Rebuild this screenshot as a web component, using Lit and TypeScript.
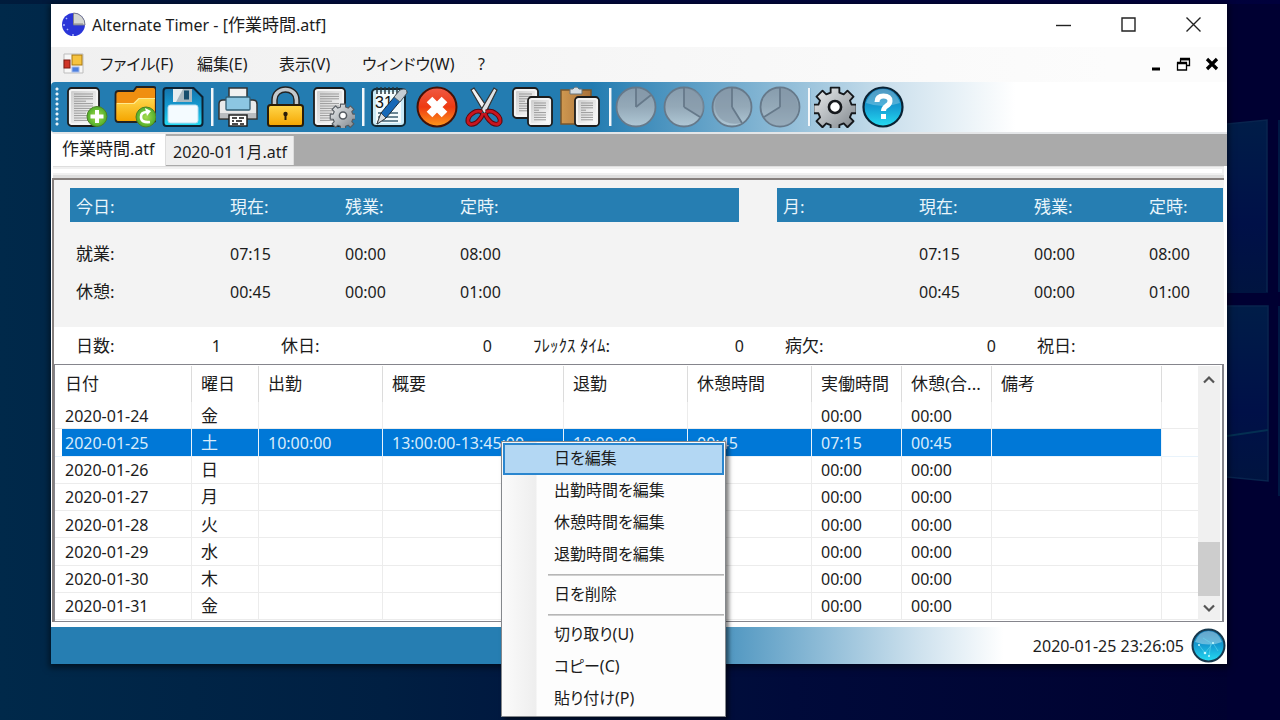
import { LitElement, html, css, svg } from "lit";
import { customElement, state } from "lit/decorators.js";
import { classMap } from "lit/directives/class-map.js";

const page = (x: number, y: number, w: number, h: number) => svg`
  <rect x=${x} y=${y} width=${w} height=${h} rx="3.5" fill="#f4f4f4" stroke="#1c1c1c" stroke-width="1.8"/>
  <rect x=${x + 3} y=${y + 3} width=${w - 6} height=${h - 6} rx="1" fill="url(#paper)"/>
  ${[0, 1, 2, 3, 4, 5, 6, 7, 8, 9, 10, 11].filter((i) => 6 + i * 2.4 < h - 5).map(
    (i) => svg`<path d="M${x + 6} ${y + 6 + i * 2.4}h${i % 5 === 3 ? w - 19 : w - 12}" stroke="#9a9a9a" stroke-width="1"/>`
  )}`;

const cog = (cx: number, cy: number, r: number, fill: string, line: string) => svg`
  <g transform="translate(${cx} ${cy}) scale(${r / 20})" stroke=${line} stroke-width=${r > 15 ? 1.9 : 2} stroke-linejoin="round" fill=${fill}>
    <path d="M-4.5-20h9v5.200l4.500 1.800 3.900-3.900 6.200 6.200-3.700 4 1.700 4.200h5.200v9h-5.200l-1.700 4.200 3.700 4-6.200 6.200-3.900-3.900-4.500 1.800v5.200h-9v-5.200l-4.500-1.800-3.900 3.900-6.200-6.200 3.700-4-1.700-4.200h-5.200v-9h5.200l1.700-4.200-3.700-4 6.200-6.200 3.900 3.900 4.500-1.800z" transform="scale(.88)"/>
    <circle r="5.500" fill="#fff" stroke-width="2.400"/>
  </g>`;

const pie = (d: string, shade: string) => svg`
  <circle cx="21" cy="21" r="19.500" fill="url(#disc)" stroke="#66798a" stroke-width="1.800"/>
  <path d=${shade} fill="#8496a5" opacity=".55"/>
  <path d=${d} fill="none" stroke="#66798a" stroke-width="1.800"/>`;

const icons: Record<string, unknown> = {
  add: svg`${page(2, 2, 31, 38)}
    <circle cx="31" cy="30.500" r="10" fill="url(#green)" stroke="#4d7f27" stroke-width="1"/>
    <path d="M31 24v13M24.500 30.500h13" stroke="#fff" stroke-width="4"/>`,
  open: svg`<path d="M1.500 8q0-3 3-3h15l3-4h17q2.500 0 2.500 3v30q0 2-3 2h-34.500q-3 0-3-3z" fill="#f08f10" stroke="#222" stroke-width="1.800"/>
    <path d="M2.500 17h17l5-5h16v21q0 2-3 2H5q-2.500 0-2.500-2z" fill="url(#gold)"/><path d="M3 17.500h17l5-5h16" fill="none" stroke="#ffe98c" stroke-width="1.200"/>
    <circle cx="32" cy="31" r="10" fill="url(#green)" stroke="#4d7f27"/>
    <path d="M36 36q-9 1-9-5 0-5 6-5" fill="none" stroke="#fff" stroke-width="2.600"/><path d="M31 22l6 3-4 5z" fill="#fff"/>`,
  save: svg`<path d="M1.500 5q0-3 3-3h27l9 9v26q0 3-3 3h-33q-3 0-3-3z" fill="url(#azure)" stroke="#0d2232" stroke-width="2"/>
    <rect x="11" y="3" width="19" height="13" fill="#a9b9c1"/><path d="M11 3h10l-7 13h-3z" fill="#e6edf0"/><rect x="22" y="4.500" width="5" height="9" fill="#174e6d"/>
    <rect x="6" y="19" width="30" height="18" rx="2.500" fill="#f4fbff" stroke="#b7dcef"/>`,
  print: svg`<path d="M12 2h18v12H12z" fill="#f1f1f1" stroke="#333" stroke-width="1.500"/>
    <path d="M2 18q0-4 4-4h30q4 0 4 4v15H2z" fill="#e9eaeb" stroke="#333" stroke-width="1.500"/><path d="M3 27h36v5H3z" fill="#b9bdc1"/>
    <rect x="9" y="11" width="24" height="13" rx="1" fill="#8cc6e2" stroke="#315d73" stroke-width="1.300"/>
    <path d="M12 29h18v11H12z" fill="#fff" stroke="#222" stroke-width="1.500"/><path d="M15 32h5m2 0h5M15 35h2m2 0h6M15 38h6m2 0h4" stroke="#111" stroke-width="1.600"/>`,
  lock: svg`<path d="M9.500 20V14C9.500 0 31.500 0 31.500 14v6" fill="none" stroke="#222" stroke-width="6.500"/><path d="M9.500 20V14C9.500 0 31.500 0 31.500 14v6" fill="none" stroke="#c3c8cc" stroke-width="3.600"/>
    <rect x="3" y="19" width="35" height="21" rx="2.500" fill="url(#gold)" stroke="#2b1d08" stroke-width="2"/><circle cx="20.500" cy="28" r="2.200" fill="#2b1d08"/><path d="M19.500 28h2v6h-2z" fill="#2b1d08"/>`,
  config: svg`${page(1, 2, 31, 38)}${cog(30, 29.5, 13, "url(#steel)", "#555b61")}`,
  note: svg`<rect x="4" y="3" width="33" height="37" rx="4" fill="#c9eaf7" stroke="#122833" stroke-width="2"/><rect x="8" y="6" width="25" height="31" fill="#f4fbfd"/>
    <path d="M9 1v7m4-7v7m4-7v7m4-7v7m4-7v7m4-7v7" stroke="#26343b" stroke-width="1.500"/>
    <text x="7" y="22" font-family="Liberation Sans" font-size="16" fill="#111">31</text>
    <path d="M10 27h20M10 31h20M14 35h16" stroke="#3e6173" stroke-width="1.500"/>
    <path d="M9 38l4-11L32 4q7-3 7 3L18 32z" fill="#1769b8" stroke="#1b2c3c" stroke-width="1"/><path d="M26 11L32 4q7-3 7 3l-7 9z" fill="#c4cdd3" stroke="#4e5a62"/><path d="M9 38l4-11 5 5z" fill="#d9dde0" stroke="#333" stroke-width=".800"/>`,
  cancel: svg`<circle cx="21" cy="21" r="19.500" fill="url(#red)" stroke="#431207" stroke-width="2"/>
    <path d="M13.500 13.500l15 15m0-15l-15 15" stroke="#fff" stroke-width="8"/>`,
  cut: svg`<path d="M7 4l3-2 15 22-4 4z" fill="#f2f2f2" stroke="#333" stroke-width="1.200"/><path d="M33 4l-3-2-13 22 4 4z" fill="#dfe2e4" stroke="#333" stroke-width="1.200"/>
    <path d="M18 26q-5-2-9 1-6 4-5 9 2 4 8 1 6-5 7-10M22 26q5-2 9 1 6 4 5 9-2 4-8 1-6-5-7-10" fill="none" stroke="#5a080d" stroke-width="4.800"/>
    <path d="M18 26q-5-2-9 1-6 4-5 9 2 4 8 1 6-5 7-10M22 26q5-2 9 1 6 4 5 9-2 4-8 1-6-5-7-10" fill="none" stroke="#c9151f" stroke-width="2.800"/>`,
  copy: svg`${page(1, 2, 25, 30)}${page(16, 11, 24, 29)}`,
  paste: svg`<path d="M1 4h30v34H1z" fill="url(#wood)" stroke="#7b552a" stroke-width="1.500"/><path d="M10 3h3q3-4 6 0h3v5H10z" fill="#d5dde2" stroke="#69747b"/>${page(15, 11, 24, 29)}`,
  pie1: pie("M21 21V2M21 21L36 9", "M21 21V2q9 1 15 7z"),
  pie2: pie("M21 21V2M21 21L37 31", "M21 21V2c18 0 25 18 16 29z"),
  pie3: pie("M21 21V2M21 21L31 37", "M21 21V2C-3 2-3 44 31 37z"),
  pie4: pie("M21 21V2M21 21L5 31", "M21 21V2c22 0 26 38 0 38q-11 0-16-9z"),
  gear: cog(21, 21, 22, "url(#steel)", "#15181c"),
  help: svg`<circle cx="21" cy="21" r="19.500" fill="url(#azure)" stroke="#0a2233" stroke-width="2.200"/><path d="M4 17Q9 3 21 3t17 14q-17 6-34 0z" fill="#fff" opacity=".250"/>
    <path d="M15 16q0-6 6.500-6t6.500 5q0 3-3.500 5-3 2-3 5" fill="none" stroke="#fff" stroke-width="5"/><path d="M19 28h5v5h-5z" fill="#fff"/>`,
};

const defs = svg`<defs>
  <linearGradient id="paper" x2="1" y2="1"><stop stop-color="#cfcfcf"/><stop offset="1" stop-color="#fbfbfb"/></linearGradient>
  <radialGradient id="green"><stop stop-color="#a7dc4f"/><stop offset="1" stop-color="#4fae2a"/></radialGradient>
  <linearGradient id="gold" x2="0" y2="1"><stop stop-color="#ffd84d"/><stop offset="1" stop-color="#f5a500"/></linearGradient>
  <linearGradient id="azure" x2="0" y2="1"><stop stop-color="#1473ab"/><stop offset=".5" stop-color="#159cd2"/><stop offset="1" stop-color="#25dcf2"/></linearGradient>
  <linearGradient id="red" x2="0" y2="1"><stop stop-color="#ef5a45"/><stop offset=".5" stop-color="#ee3a12"/><stop offset="1" stop-color="#ff9a1c"/></linearGradient>
  <linearGradient id="steel" x2="1" y2="1"><stop stop-color="#eceeef"/><stop offset=".5" stop-color="#b4b9bd"/><stop offset="1" stop-color="#7c8288"/></linearGradient>
  <linearGradient id="wood" x2="1" y2="0"><stop stop-color="#cf9850"/><stop offset="1" stop-color="#a8713a"/></linearGradient>
  <linearGradient id="disc" x2="0" y2="1"><stop stop-color="#879cad"/><stop offset=".5" stop-color="#94a9b8"/><stop offset="1" stop-color="#b0c8d6"/></linearGradient>
</defs>`;

const tools: [string, string][] = [
  ["add", "新規"], ["open", "開く"], ["save", "保存"], ["|", ""],
  ["print", "印刷"], ["lock", "ロック"], ["config", "設定"], ["|", ""],
  ["note", "日を編集"], ["cancel", "削除"], ["cut", "切り取り"], ["copy", "コピー"], ["paste", "貼り付け"], ["|", ""],
  ["pie1", "出勤"], ["pie2", "休憩開始"], ["pie3", "休憩終了"], ["pie4", "退勤"], ["|", ""],
  ["gear", "オプション"], ["help", "ヘルプ"],
];

const rows = [
  ["2020-01-24", "金", "", "", "", "", "00:00", "00:00", ""],
  ["2020-01-25", "土", "10:00:00", "13:00:00-13:45:00", "18:00:00", "00:45", "07:15", "00:45", ""],
  ["2020-01-26", "日", "", "", "", "", "00:00", "00:00", ""],
  ["2020-01-27", "月", "", "", "", "", "00:00", "00:00", ""],
  ["2020-01-28", "火", "", "", "", "", "00:00", "00:00", ""],
  ["2020-01-29", "水", "", "", "", "", "00:00", "00:00", ""],
  ["2020-01-30", "木", "", "", "", "", "00:00", "00:00", ""],
  ["2020-01-31", "金", "", "", "", "", "00:00", "00:00", ""],
];
const columns = ["日付", "曜日", "出勤", "概要", "退勤", "休憩時間", "実働時間", "休憩(合...", "備考"];

@customElement("app-root")
export class AppRoot extends LitElement {
  @state() private selected = 1;

  static styles = css`
    :host {
      display: flex;
      box-sizing: border-box;
      position: relative;
      min-height: 100vh;
      padding: 4px 53px 56px 51px;
      overflow: hidden;
      font: 16px/24px "Noto Sans", "Noto Sans CJK JP", sans-serif;
      color: #1c1c1c;
      background: linear-gradient(to right, #00294a 0, #001f42 30%, #000a3a 62%, #00002f 100%);
    }
    * { box-sizing: border-box; }
    button { font: inherit; color: inherit; background: none; border: 0; padding: 0; margin: 0; text-align: left; }
    svg { display: block; }
    .defs { position: absolute; width: 0; height: 0; }
    .wall { position: absolute; top: 0; right: 0; width: 53px; height: 720px; }
    .shade { position: absolute; top: 0; left: 0; width: 100%; height: 4px; background: linear-gradient(to right, #001c3c, #000a3c 30%, #00003c); }
    .window { position: relative; flex: 1; min-width: 0; display: flex; flex-direction: column; background: #fff; box-shadow: 0 2px 6px 2px rgba(0, 0, 0, .5); }
    .ja { font-size: 17px; }
    .kana { font-feature-settings: "palt"; }

    .title { display: flex; align-items: center; height: 43px; padding: 0 25px 2px 10px; gap: 5px; }
    .title h1 { flex: 1; margin: 0; font-size: 16px; font-weight: 400; white-space: nowrap; }
    .winbtns { display: flex; gap: 48px; }

    .menubar { display: flex; align-items: center; height: 35px; padding: 0 8px 2px 12px; background: linear-gradient(to right, #f0f0f0, #fcfcfc 90%); }
    .menus { flex: 1; display: grid; grid-template-columns: 97px 82px 83px 116px 1fr; margin-left: 16px; white-space: nowrap; }
    .mdibtns { display: flex; gap: 14px; align-items: center; }

    .toolbar { display: flex; align-items: center; gap: 6px; height: 52px; padding: 0 4px; border-bottom: 2px solid #e4e6e8; background: linear-gradient(to right, #237cb1 46%, #cfe2ee 72%, #fff 82%); border-radius: 4px 0 0 4px; }
    .grip { width: 5px; height: 40px; background: radial-gradient(circle at 2px 2px, #e8f2f8 1px, transparent 2px) 0 0 / 5px 5px; }
    .tool { width: 42px; height: 42px; }
    .tool:disabled { opacity: 1; }
    .sep { width: 3px; height: 38px; margin: 0 -3px 0 1px; background: #f3f7fa; border-right: 1px solid #8bb7d3; }

    .tabs { display: flex; align-items: flex-end; height: 32px; background: #aaa; }
    .tab { height: 29px; padding: 2px 6px 0 7px; background: #efefef; border-right: 1px solid #ddd; white-space: nowrap; margin-bottom: 1px; }
    .tab.on { width: 115px; height: 32px; padding: 0 0 2px 11px; background: #fff; margin: 0; }
    .band { height: 12px; margin: 0 3px 0 2px; padding-top: 1px; background: #dedede; }
    .band div { height: 8px; background: #fff; border: 2px solid #f0f0f0; border-left: 0; }

    .doc { flex: 1; display: flex; flex-direction: column; margin: 0 3px 0 1px; border: solid #857f7d; border-width: 2px 0 0 2px; }
    .summary { display: flex; gap: 38px; padding: 8px 1px 16px 16px; background: #f3f3f3; }
    .totals { table-layout: fixed; border-spacing: 0; height: 123px; }
    .totals th, .totals td { padding: 0; text-align: left; font-weight: 400; }
    .totals thead th { height: 34px; padding-top: 4px; color: #e9f5fb; background: #267eb2; }
    .totals tbody tr:first-child > * { height: 51px; padding-top: 13px; }
    .totals .first { padding-left: 6px; }
    .today { flex: 3; }
    .month { flex: 2; }
    .c160 { width: 160px; } .c142 { width: 142px; } .c115 { width: 115px; }

    .counts { display: grid; grid-template-columns: 205fr 252fr 252fr 252fr 187fr; height: 37px; margin: 0; padding: 0 0 0 22px; align-items: center; }
    .counts div { display: flex; justify-content: space-between; padding-right: 41px; }
    .counts div:first-child { padding-right: 60px; }
    .counts dd { margin: 0; }

    .list { flex: 1; display: flex; min-height: 258px; padding: 1px 2px 1px 0; background: #fff; border: 1px solid #85858c; border-right-width: 2px; }
    .grid { flex: 1; table-layout: fixed; border-spacing: 0; min-width: 0; height: 254px; }
    .grid th { height: 36px; padding: 0 0 1px 9px; text-align: left; font-weight: 400; font-size: 17px; border-right: 1px solid #dcdcdc; overflow: hidden; white-space: nowrap; }
    .grid td { padding: 1px 0 0 9px; border-right: 1px solid #ececec; border-bottom: 1px solid #ececec; white-space: nowrap; overflow: hidden; }
    .grid th:first-child, .grid td:first-child { padding-left: 10px; }
    .grid th:last-child, .grid td:last-child { border-right: 0; }
    .grid .sel td { color: #d9ecfb; background: #0078d7; border-color: #e9f3fb; }
    .grid .sel td:first-child { background: linear-gradient(to right, #fff 7px, #0078d7 7px); }
    .grid .sel td:last-child { background: #fff; }
    .w137 { width: 137px; } .w67 { width: 67px; } .w124 { width: 124px; } .w181 { width: 181px; } .w90 { width: 90px; } .w170 { width: 170px; }
    .scroll { width: 22px; display: flex; flex-direction: column; justify-content: space-between; background: #f0f0f0; }
    .scroll button { height: 26px; display: grid; place-items: center; }
    .scroll .down { height: 24px; }
    .track { flex: 1; display: flex; flex-direction: column; justify-content: flex-end; }
    .thumb { height: 54px; background: #cdcdcd; }

    .status { display: flex; align-items: center; justify-content: flex-end; gap: 7px; height: 37px; margin-top: 5px; padding-right: 1px; background: linear-gradient(to right, #267eb2 52%, #cfe2ee 74%, #fff 81%); }

    .context { position: absolute; left: 450px; top: 437px; width: 225px; margin: 0; padding: 1px; list-style: none; border: 1px solid #85888c; background: linear-gradient(to right, #fbfbfb, #eee 34px, #fdfdfd 35px); box-shadow: 3px 3px 4px rgba(0, 0, 0, .5); }
    .context button { display: block; width: 100%; height: 32px; padding: 0 0 2px 50px; border: 1px solid transparent; white-space: nowrap; }
    .context .hot { background: #b3d7f3; border: 2px solid #2a86cf; padding-left: 49px; }
    .context hr { height: 2px; margin: 3px 0 3px 45px; border: 0; background: linear-gradient(#aaa, #ddd); }
  `;

  private totals(kind: string, label: string) {
    const month = kind === "month";
    return html`<table class="totals ${kind}">
      <colgroup><col class=${month ? "c142" : "c160"} /><col class="c115" /><col class="c115" /><col /></colgroup>
      <thead><tr class="ja"><th class="first">${label}</th><th>現在:</th><th>残業:</th><th>定時:</th></tr></thead>
      <tbody>
        <tr><th class="first ja">${month ? "" : "就業:"}</th><td>07:15</td><td>00:00</td><td>08:00</td></tr>
        <tr><th class="first ja">${month ? "" : "休憩:"}</th><td>00:45</td><td>00:00</td><td>01:00</td></tr>
      </tbody>
    </table>`;
  }

  render() {
    const icon = (name: string) => html`<svg width="42" height="42" viewBox="0 0 42 42">${icons[name]}</svg>`;
    const count = (label: string, value: string) => html`<div><dt class="ja">${label}</dt><dd>${value}</dd></div>`;
    const widths = ["w137", "w67", "w124", "w181", "w124", "w124", "w90", "w90", "w170"];
    return html`
      <svg class="defs" aria-hidden="true">${defs}</svg>
      <svg class="wall" viewBox="0 0 53 720" preserveAspectRatio="none" aria-hidden="true">
        <defs><linearGradient id="pane" x2="0" y2="1"><stop stop-color="#001d48"/><stop offset=".6" stop-color="#001048"/><stop offset="1" stop-color="#001440"/></linearGradient></defs>
        <path d="M0 0h53v720H0z" fill="#000032"/>
        <path d="M0 124l40-4v172l1 0v1H0z" fill="url(#pane)"/><path d="M0 306h41v175l-41-4z" fill="url(#pane)"/>
        <path d="M0 124l40-4v172M0 306h41v175l-41-4" fill="none" stroke="#08244e" stroke-width="1.500"/>
        <path d="M0 436l41-6" stroke="#042f52" stroke-width="2"/>
        <path d="M52 120v172M52 306v190" stroke="#001844" stroke-width="2"/>
      </svg>
      <div class="shade"></div>
      <main class="window">
        <header class="title">
          <svg width="26" height="26" viewBox="0 0 26 26"><circle cx="12.500" cy="12.500" r="11.500" fill="#2a35d8"/><path d="M12.500 13V1a11.500 11.500 0 0 1 11.500 12z" fill="#d4d6d2" stroke="#75778f"/><path d="M2 13h2m8 9v2m-6-6l1-1M5 6l1 1" stroke="#aeb9ff" stroke-width="1.500"/><path d="M12.500 3v9H22" fill="none" stroke="#888" stroke-width="1"/></svg>
          <h1>Alternate Timer - [<span class="ja">作業時間</span>.atf]</h1>
          <div class="winbtns">
            <button aria-label="最小化"><svg width="17" height="17" viewBox="0 0 17 17"><path d="M1 9.500h15" stroke="#222" stroke-width="1.400"/></svg></button>
            <button aria-label="最大化"><svg width="17" height="17" viewBox="0 0 17 17"><path d="M2 2h13v13H2z" fill="none" stroke="#222" stroke-width="1.400"/></svg></button>
            <button aria-label="閉じる"><svg width="17" height="17" viewBox="0 0 17 17"><path d="M1.500 1.500l14 14m0-14l-14 14" stroke="#222" stroke-width="1.400"/></svg></button>
          </div>
        </header>
        <nav class="menubar">
          <svg width="21" height="21" viewBox="0 0 21 21"><path d="M1 1h19v19H1z" fill="#f7f7f7" stroke="#bdbdbd"/><rect x="9" y="2" width="10" height="10" fill="#f6c33f" stroke="#a87812"/><rect x="1" y="7" width="6" height="8" fill="#cf3427" stroke="#7c1a12"/><rect x="9" y="14" width="7" height="5" fill="#4d7fe0" stroke="#9fb8ea"/></svg>
          <div class="menus kana">
            ${["ファイル(F)", "編集(E)", "表示(V)", "ウィンドウ(W)", "?"].map((m) => html`<button>${m}</button>`)}
          </div>
          <div class="mdibtns">
            <button aria-label="最小化"><svg width="12" height="14" viewBox="0 0 12 14"><path d="M2 12h8" stroke="#000" stroke-width="3"/></svg></button>
            <button aria-label="元に戻す"><svg width="15" height="14" viewBox="0 0 15 14"><path d="M4.500 5V2.500h9v6h-3" fill="none" stroke="#000" stroke-width="1.300"/><path d="M4 2h10" stroke="#000" stroke-width="2.500"/><path d="M1.500 6h9v7h-9z" fill="#fff" stroke="#000" stroke-width="1.300"/><path d="M1 6h10" stroke="#000" stroke-width="2.500"/></svg></button>
            <button aria-label="閉じる"><svg width="14" height="14" viewBox="0 0 14 14"><path d="M2 2l10 10m0-10L2 12" stroke="#000" stroke-width="3.200"/></svg></button>
          </div>
        </nav>
        <div class="toolbar">
          <div class="grip"></div>
          ${tools.map(([name, label]) => name === "|" ? html`<span class="sep"></span>`
            : html`<button class="tool" aria-label=${label} ?disabled=${name.startsWith("pie")}>${icon(name)}</button>`)}
        </div>
        <div class="tabs"><button class="tab on"><span class="ja">作業時間</span>.atf</button><button class="tab">2020-01 1月.atf</button></div>
        <div class="band"><div></div></div>
        <section class="doc">
          <div class="summary">${this.totals("today", "今日:")}${this.totals("month", "月:")}</div>
          <dl class="counts">
            ${count("日数:", "1")}${count("休日:", "0")}${count("ﾌﾚｯｸｽ ﾀｲﾑ:", "0")}${count("病欠:", "0")}${count("祝日:", "")}
          </dl>
          <div class="list">
            <table class="grid">
              <colgroup>${widths.map((w) => html`<col class=${w} />`)}<col /></colgroup>
              <thead><tr>${columns.map((c) => html`<th>${c}</th>`)}<th></th></tr></thead>
              <tbody>
                ${rows.map((r, i) => html`<tr class=${classMap({ sel: i === this.selected })} @click=${() => (this.selected = i)}>
                  ${r.map((c, j) => html`<td class=${j === 1 ? "ja" : ""}>${c}</td>`)}<td></td>
                </tr>`)}
              </tbody>
            </table>
            <div class="scroll">
              <button aria-label="上へ"><svg width="12" height="9" viewBox="0 0 12 9"><path d="M1 7.500l5-5 5 5" fill="none" stroke="#555" stroke-width="2.200"/></svg></button>
              <div class="track"><div class="thumb"></div></div>
              <button class="down" aria-label="下へ"><svg width="12" height="9" viewBox="0 0 12 9"><path d="M1 1.500l5 5 5-5" fill="none" stroke="#555" stroke-width="2.200"/></svg></button>
            </div>
          </div>
        </section>
        <footer class="status">
          <time>2020-01-25 23:26:05</time>
          <svg width="35" height="35" viewBox="0 0 35 35"><circle cx="17.500" cy="17.500" r="16" fill="url(#azure)" stroke="#17384d" stroke-width="2"/><path d="M4 14Q8 3 17.500 3T31 14q-13 5-27 0z" fill="#fff" opacity=".350"/><path d="M8 17l6 8 8-10 5 8M12 10l8 5-2 13" fill="none" stroke="#6fdcf0" stroke-width=".500"/><g fill="#c9fbff"><circle cx="14" cy="25" r="1.300"/><circle cx="22" cy="15" r="1"/><circle cx="18" cy="28" r="1"/><circle cx="8" cy="17" r="1"/></g></svg>
        </footer>
        <menu class="context kana">
          ${["日を編集", "出勤時間を編集", "休憩時間を編集", "退勤時間を編集", "-", "日を削除", "-", "切り取り(U)", "コピー(C)", "貼り付け(P)"].map((m, i) =>
            html`<li>${m === "-" ? html`<hr />` : html`<button class=${i === 0 ? "hot" : ""}>${m}</button>`}</li>`)}
        </menu>
      </main>`;
  }
}
